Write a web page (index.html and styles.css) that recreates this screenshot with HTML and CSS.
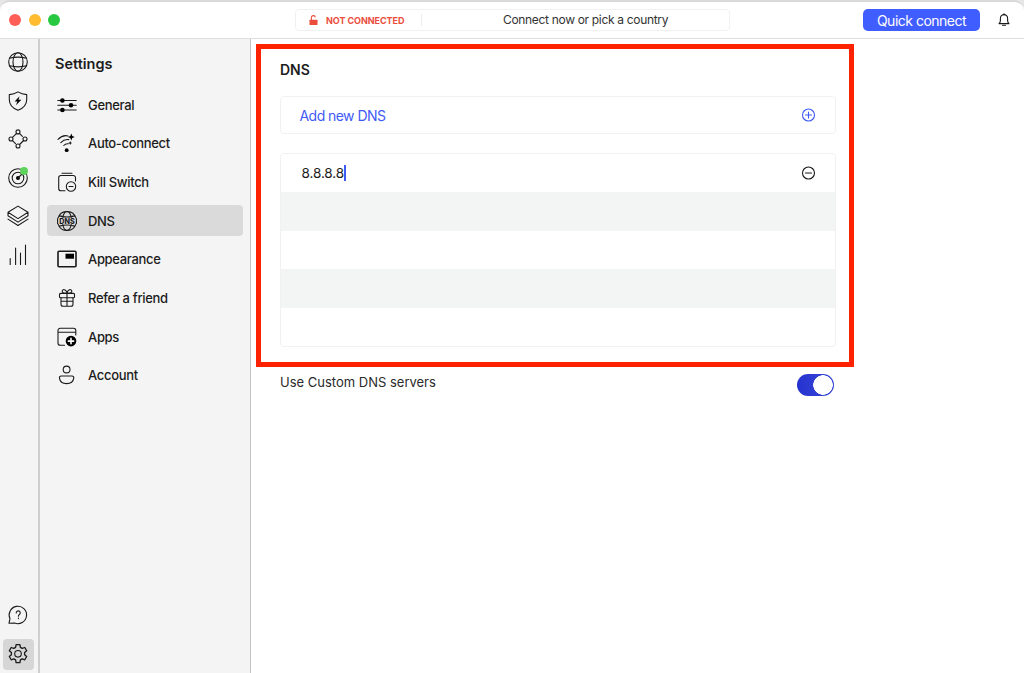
FILE: index.html
```
<!DOCTYPE html>
<html lang="en">
<head>
    <meta charset="UTF-8">
    <title>Settings - DNS</title>
    <link rel="stylesheet" href="styles.css">
</head>
<body>
    <div class="window">
        <header class="titlebar">
            <div class="lights">
                <span class="light red"></span>
                <span class="light yellow"></span>
                <span class="light green"></span>
            </div>
            <div class="status">
                <svg class="lock" width="9" height="11" viewBox="0 0 9 11"><rect x="0.5" y="4.7" width="8" height="5.3" rx="0.6"/><path d="M2.400 5V2.800a1.900 1.900 0 0 1 3.900-.4"/></svg>
                <span class="state">NOT CONNECTED</span>
                <span class="message">Connect now or pick a country</span>
            </div>
            <button class="quick">Quick connect</button>
            <svg class="bell" width="12" height="14" viewBox="0 0 12 14"><path d="M1 10.600c1-.9 1.400-1.900 1.400-3.200V5.200a3.600 3.600 0 0 1 7.200 0v2.200c0 1.300.4 2.300 1.400 3.200z"/><path d="M4.500 12.300h3"/><path d="M6 .7v1"/></svg>
        </header>

        <div class="body">
            <nav class="rail">
                <a class="tool"><svg width="22" height="22" viewBox="0 0 22 22"><circle cx="11" cy="11" r="9.300"/><ellipse cx="11" cy="11" rx="5" ry="9.300"/><path d="M2.500 7.200q8.500-2.200 17 0M2.500 14.800q8.500 2.200 17 0"/></svg></a>
                <a class="tool"><svg width="22" height="22" viewBox="0 0 22 22"><path d="M11 1.900c2.700 1.700 5.500 2.500 8.700 2.700v4.800c0 5.300-3.500 8.800-8.700 10.900-5.200-2.100-8.700-5.600-8.700-10.900V4.600c3.200-.2 6-1 8.700-2.700z"/><path class="fill" d="M12.600 6.300l-5 5.200h2.800l-1.500 3.800 5.500-5.500h-2.900z"/></svg></a>
                <a class="tool"><svg width="22" height="22" viewBox="0 0 22 22"><circle cx="11" cy="3.900" r="2"/><circle cx="18" cy="11" r="2"/><circle cx="11" cy="18" r="2"/><circle cx="4" cy="11" r="2"/><path d="M9.600 5.300L5.500 9.400M12.400 5.300l3 3M16.600 12.500l-4 4M5.500 12.600l3 3"/></svg></a>
                <a class="tool"><svg width="22" height="22" viewBox="0 0 22 22"><circle cx="11" cy="11" r="9.300"/><circle cx="11" cy="11" r="5.800"/><circle class="fill" cx="11" cy="11" r="2"/><path d="M11 11l4-4"/></svg><i class="dot"></i></a>
                <a class="tool"><svg width="22" height="22" viewBox="0 0 22 22"><path d="M11 1.100l10 6.200-10 6.300L1 7.300zM1 10.800l10 6.300 10-6.300M1 14.100l10 6.400 10-6.400M1 7.600v3.200M21 7.600v3.200"/></svg></a>
                <a class="tool"><svg width="22" height="22" viewBox="0 0 22 22"><path d="M3.200 14.500v6M8.600 4v16.500M13.500 9v11.500M18.500 1v19.500"/></svg></a>
                <span class="spacer"></span>
                <a class="tool"><svg width="22" height="22" viewBox="0 0 22 22"><path d="M2 19.200l1-4.500A8.700 8.700 0 1 1 7.500 19z"/><path d="M9.200 8.900a2 2 0 1 1 3.200 1.600c-.8.500-1 .9-1 1.800M11.400 14v.6"/></svg></a>
                <a class="tool active"><svg width="22" height="22" viewBox="0 0 22 22"><path class="gear" d="M9.100 1.700h3.800l.5 2.700 1.800 1 2.600-.9 1.900 3.300-2.100 1.800v2.100l2.100 1.800-1.900 3.300-2.600-.9-1.800 1-.5 2.700H9.100l-.5-2.700-1.800-1-2.600.9-1.900-3.300 2.100-1.800V9.600L2.300 7.800l1.900-3.300 2.600.9 1.800-1z"/><circle cx="11" cy="10.800" r="3.300"/></svg></a>
            </nav>

            <aside class="sidebar">
                <h2>Settings</h2>
                <ul class="menu">
                    <li><svg width="20" height="20" viewBox="0 0 20 20"><path d="M.8 5.500h18.400M.8 10.300h18.400M.8 15h18.400"/><circle class="fill" cx="5.400" cy="5.500" r="2.300"/><circle class="fill" cx="14" cy="10.300" r="2.300"/><circle class="fill" cx="5.400" cy="15" r="2.300"/></svg>General</li>
                    <li><svg width="20" height="20" viewBox="0 0 20 20"><path d="M1 6.400C4 3.300 8 2.200 11 3M3.800 9.600c2.500-2.700 5.200-3.500 8-3M6.800 12.500c1.300-1.500 3-2 4.500-1.700"/><circle class="fill" cx="9.700" cy="17.200" r="1.900"/><path class="fill" d="M14.300.6l1 2.400 2.500 1-2.500 1-1 2.500-1-2.500-2.500-1 2.500-1zM13.200 7.900l.6 1.500 1.500.6-1.500.6-.6 1.500-.6-1.500-1.500-.6 1.500-.6z"/></svg>Auto-connect</li>
                    <li><svg width="20" height="20" viewBox="0 0 20 20"><path d="M5 1.300h10M8 18.700H4a2.300 2.300 0 0 1-2.300-2.300V5.800A2.300 2.300 0 0 1 4 3.500h12.200a2.300 2.300 0 0 1 2.300 2.300V9"/><circle cx="14" cy="14.500" r="4.700"/><path d="M12 14.500h4"/></svg>Kill Switch</li>
                    <li class="selected"><svg width="20" height="20" viewBox="0 0 20 20"><path d="M1.100 6.900a9.400 9.400 0 0 1 17.800 0M1.100 13.100a9.400 9.400 0 0 0 17.800 0M5.800 6.500C6.400 3 8 .7 10 .7s3.600 2.300 4.200 5.800M5.800 13.500c.6 3.500 2.200 5.800 4.200 5.800s3.600-2.300 4.200-5.800M2.500 4.900q7.500 2.300 15 0M2.500 15.100q7.500-2.300 15 0M.6 7.500v5M19.400 7.500v5"/><text x="10" y="12.600" text-anchor="middle">DNS</text></svg>DNS</li>
                    <li><svg width="20" height="20" viewBox="0 0 20 20"><rect class="bold" x="1" y="2.200" width="18" height="15.600" rx="1"/><rect class="fill" x="8.500" y="4.700" width="8.500" height="5"/></svg>Appearance</li>
                    <li><svg width="20" height="20" viewBox="0 0 20 20"><rect x="2.500" y="5.400" width="15" height="4.400" rx="1"/><path d="M4 9.800v6.400a2 2 0 0 0 2 2h8a2 2 0 0 0 2-2V9.800M10 5.400v12.800M4 13.300h12M10 5.400C8.500 5.400 5.200 5.300 5.200 3.200c0-2.500 4.300-2.300 4.800 2.200.5-4.500 4.800-4.700 4.800-2.200 0 2.100-3.300 2.200-4.800 2.200z"/></svg>Refer a friend</li>
                    <li><svg width="20" height="20" viewBox="0 0 20 20"><path d="M7.500 18.200H3.300a2.300 2.300 0 0 1-2.300-2.300V3.500a2.300 2.300 0 0 1 2.300-2.300h13.200a2.300 2.300 0 0 1 2.300 2.300V8M1 5.200h17.800"/><circle class="fill" cx="14" cy="14.100" r="5.300"/><path class="plus" d="M14 11.400v5.400M11.300 14.100h5.400"/></svg>Apps</li>
                    <li><svg width="20" height="20" viewBox="0 0 20 20"><circle cx="9.600" cy="4.500" r="3.400"/><path d="M4.100 11h11a1.700 1.700 0 0 1 1.700 1.900c-.5 3.700-3.500 5.700-7.200 5.700s-6.700-2-7.200-5.700A1.700 1.700 0 0 1 4.100 11z"/></svg>Account</li>
                </ul>
            </aside>

            <main class="content">
                <section class="dns-box">
                    <h3>DNS</h3>
                    <div class="add">
                        <span>Add new DNS</span>
                        <svg width="15" height="14" viewBox="0 0 15 14"><circle cx="7.500" cy="7" r="6"/><path d="M7.500 4v6M4.500 7h6"/></svg>
                    </div>
                    <div class="list">
                        <div class="row">
                            <span class="address">8.8.8.8</span>
                            <svg width="15" height="14" viewBox="0 0 15 14"><circle cx="7.500" cy="7" r="6"/><path d="M4.500 7h6"/></svg>
                        </div>
                        <div class="row"></div>
                        <div class="row"></div>
                        <div class="row"></div>
                        <div class="row"></div>
                    </div>
                </section>
                <div class="custom">
                    <span>Use Custom DNS servers</span>
                    <span class="toggle"></span>
                </div>
            </main>
        </div>
    </div>
</body>
</html>
```
FILE: styles.css
```
* {
    box-sizing: border-box;
}
body {
    margin: 0;
    background: #e6e6e6;
    font-family: Inter, "Liberation Sans", sans-serif;
    font-size: 13px;
    color: #1c1c1c;
}
svg {
    display: block;
    flex: none;
    fill: none;
    stroke: #1a1a1a;
    stroke-width: 1.1;
    stroke-linecap: round;
    stroke-linejoin: round;
}
.fill {
    fill: #000;
    stroke: none;
}
.bold {
    stroke-width: 1.6;
}
.gear {
    stroke-width: 1.3;
}
.plus {
    stroke: #fff;
    stroke-width: 1.6;
}
.window {
    height: 673px;
    display: flex;
    flex-direction: column;
    border-top: 2px solid #d9d9d9;
    border-radius: 10px 10px 0 0;
    background: #fff;
    overflow: hidden;
}

/* title bar */
.titlebar {
    height: 37px;
    flex: none;
    display: flex;
    align-items: center;
    border-bottom: 1px solid #dedede;
}
.lights {
    display: flex;
    gap: 7.400px;
    width: 295px;
    padding-left: 9.300px;
}
.light {
    width: 12px;
    height: 12px;
    border-radius: 50%;
}
.red { background: #ff5f57; }
.yellow { background: #febc2e; }
.green { background: #28c840; }
.status {
    width: 435px;
    height: 22px;
    display: flex;
    align-items: center;
    border: 1px solid #f1f1f1;
    border-radius: 4px;
}
.lock {
    margin-left: 13px;
    stroke: #eb4d3d;
    stroke-linecap: butt;
}
.lock rect {
    fill: #eb4d3d;
    stroke: none;
}
.state {
    width: 96px;
    height: 12px;
    margin-left: 8px;
    line-height: 13px;
    border-right: 1px solid #ededed;
    font-size: 9px;
    font-weight: 700;
    letter-spacing: -0.05px;
    color: #eb4d3d;
    white-space: nowrap;
}
.message {
    margin-left: 81px;
    line-height: 18px;
    padding-bottom: 1px;
    font-size: 12px;
    letter-spacing: -0.32px;
    color: #333;
    white-space: nowrap;
}
.quick {
    width: 117px;
    height: 22px;
    margin-left: 133px;
    padding: 0;
    border: none;
    border-radius: 5px;
    background: #405dff;
    color: #fff;
    font: 14px Inter, "Liberation Sans", sans-serif;
    letter-spacing: -0.5px;
}
.bell {
    margin-left: 18px;
}

.body {
    flex: 1;
    display: flex;
    min-height: 0;
}

/* icon rail */
.rail {
    width: 40px;
    display: flex;
    flex-direction: column;
    gap: 7.600px;
    padding: 7.500px 0 3.500px 3px;
    border-right: 2px solid #cfcfcf;
    background: #f4f4f4;
}
.tool {
    position: relative;
    width: 31px;
    height: 31px;
    display: flex;
    align-items: center;
    justify-content: center;
    border-radius: 4px;
}
.tool svg {
    margin-right: 1px;
}
.active {
    background: #d6d6d6;
}
.dot {
    position: absolute;
    top: 5px;
    right: 6px;
    width: 8px;
    height: 8px;
    border-radius: 50%;
    background: #5fd35d;
}
.spacer {
    flex: 1;
}

/* settings menu */
.sidebar {
    width: 211px;
    padding: 0 7px;
    border-right: 1px solid #c4c4c4;
    background: #f4f4f4;
}
.sidebar h2 {
    height: 50px;
    margin: 0;
    padding-left: 8px;
    line-height: 49px;
    font-size: 14.500px;
    font-weight: 600;
}
.menu {
    display: flex;
    flex-direction: column;
    gap: 7.700px;
    margin: 0;
    padding: 0;
    list-style: none;
}
.menu li {
    height: 31px;
    display: flex;
    align-items: center;
    gap: 11px;
    padding-left: 10px;
    border-radius: 4px;
    font-weight: 500;
    letter-spacing: -0.33px;
}
.menu .selected {
    background: #dadada;
}
.menu text {
    font-size: 7.200px;
    font-weight: 800;
    letter-spacing: 0;
    fill: #1a1a1a;
    stroke: none;
}

/* dns settings */
.content {
    flex: 1;
    padding: 5px 0 0 5px;
}
.dns-box {
    width: 598px;
    height: 323px;
    padding: 0 13.500px 0 19px;
    border: 5px solid #ff2200;
}
.dns-box h3 {
    height: 47px;
    margin: 0;
    line-height: 42px;
    font-size: 14px;
    font-weight: 600;
}
.add, .list {
    border: 1px solid #f1f1f1;
    border-radius: 4px;
}
.add {
    height: 38px;
    display: flex;
    align-items: center;
    justify-content: space-between;
    padding: 0 18.500px;
    font-size: 14px;
    letter-spacing: -0.55px;
    color: #3f5bf6;
}
.add svg {
    stroke: #3f5bf6;
}
.list {
    height: 194px;
    display: grid;
    grid-template-rows: repeat(5, 1fr);
    margin-top: 19px;
}
.row {
    display: flex;
    align-items: center;
    justify-content: space-between;
    padding: 0 18.500px 0 20.500px;
    font-size: 13.500px;
    letter-spacing: -0.1px;
}
.row:nth-child(even) {
    background: #f3f5f4;
}
.address {
    height: 16px;
    line-height: 16px;
    border-right: 2px solid #3f5bf6;
}
.custom {
    width: 578px;
    display: flex;
    justify-content: space-between;
    padding: 7px 0 0 24px;
    color: #2a2a2a;
}
.custom > span:first-child {
    line-height: 17px;
}
.toggle {
    width: 37px;
    height: 22px;
    border-radius: 11px;
    background: radial-gradient(circle at 26px 11px, #fff 9.500px, transparent 10px), linear-gradient(90deg, #2532cf, #3b49d8);
}
```
